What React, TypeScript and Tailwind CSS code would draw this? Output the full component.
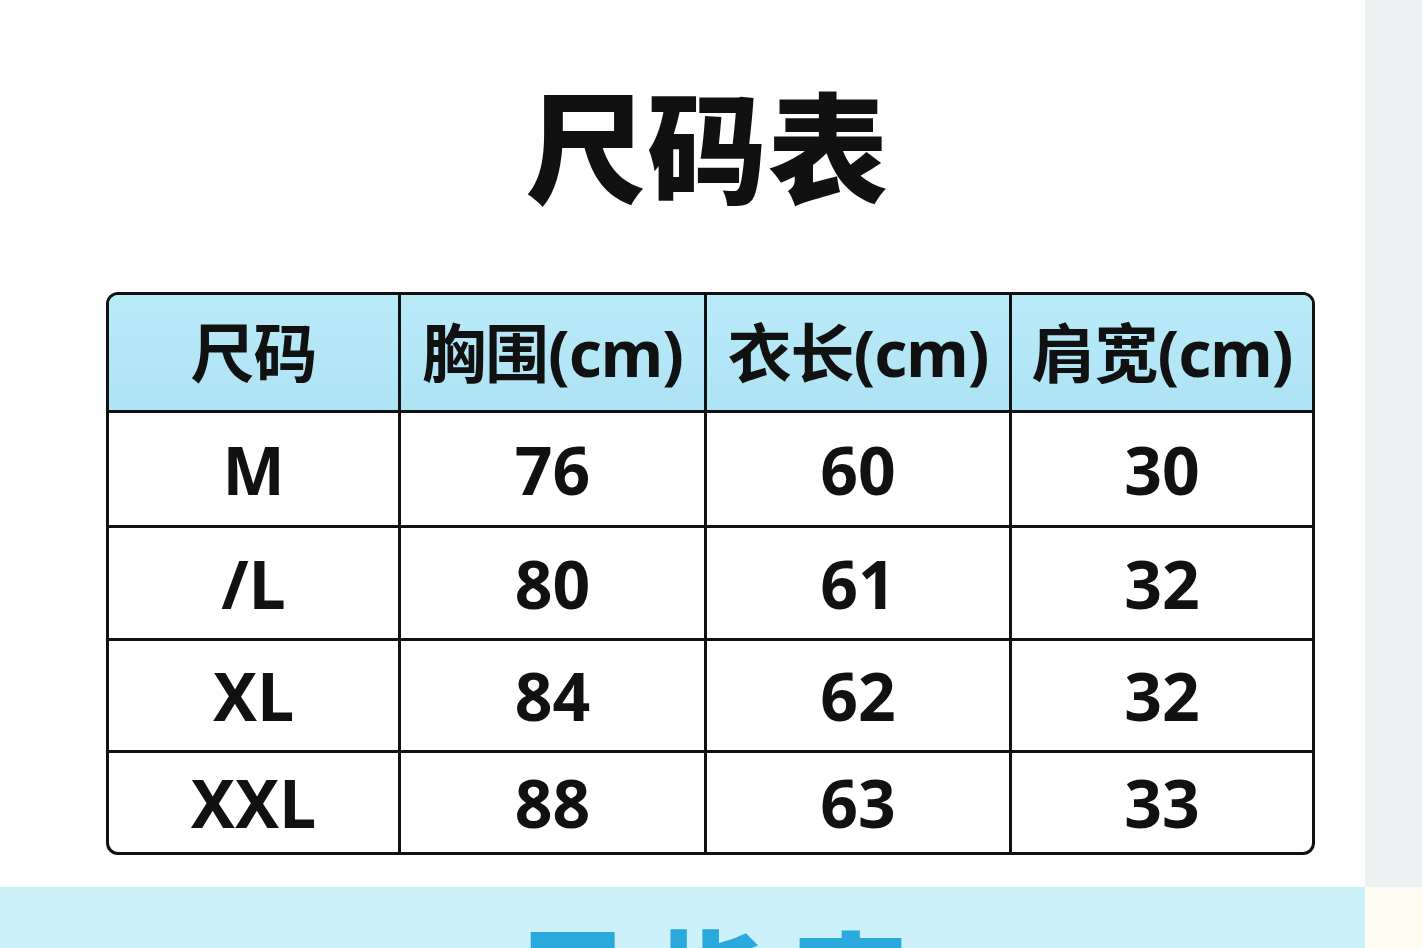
import React from 'react'

const headers = ['尺码', '胸围(cm)', '衣长(cm)', '肩宽(cm)']

const rows = [
    { size: 'M', chest: '76', length: '60', shoulder: '30', h: 'h-[115px]' },
    { size: '/L', chest: '80', length: '61', shoulder: '32', h: 'h-[113px]' },
    { size: 'XL', chest: '84', length: '62', shoulder: '32', h: 'h-[112px]' },
    { size: 'XXL', chest: '88', length: '63', shoulder: '33', h: 'h-[99px]' },
]

const font = { fontFamily: '"Noto Sans", "Noto Sans CJK SC", sans-serif' }

export default function App() {
    return (
        <div className="flex w-[1422px] h-[948px] overflow-hidden" style={font}>
            <div className="flex flex-col w-[1365px]">
                <div className="h-[887px] bg-[#fefefe] flex flex-col items-center pl-[56px]">
                    <p className="mt-[89px] text-[120px] leading-none font-black text-[#111] tracking-[1px] pr-[6px]">
                        尺码表
                    </p>

                    <div className="mt-[83px] w-[1209px] border-[3px] border-[#111] rounded-[12px] overflow-hidden bg-white">
                        <div className="grid grid-cols-[292px_306px_305px_300px] h-[118px] bg-gradient-to-b from-[#b9eaf8] to-[#aee3f4] border-b-[3px] border-[#111]">
                            {headers.map((h, i) => (
                                <div
                                    key={h}
                                    className={`flex items-center justify-center text-[64px] font-bold text-[#111] tracking-[-1px] ${i < 3 ? 'border-r-[3px] border-[#111]' : ''}`}
                                >
                                    {h}
                                </div>
                            ))}
                        </div>
                        {rows.map((r, ri) => (
                            <div
                                key={r.size}
                                className={`grid grid-cols-[292px_306px_305px_300px] ${r.h} ${ri < rows.length - 1 ? 'border-b-[3px] border-[#111]' : ''}`}
                            >
                                {[r.size, r.chest, r.length, r.shoulder].map((v, i) => (
                                    <div
                                        key={i}
                                        className={`flex items-center justify-center text-[66px] font-bold text-[#111] ${i < 3 ? 'border-r-[3px] border-[#111]' : ''}`}
                                    >
                                        {v}
                                    </div>
                                ))}
                            </div>
                        ))}
                    </div>
                </div>
                <div className="h-[61px] bg-[#cdf1fa] flex justify-center overflow-hidden pl-[56px]">
                    <p className="mt-[39px] text-[114px] leading-none font-black text-[#29a9dc] tracking-[26px] pl-[26px]">
                        尺指南
                    </p>
                </div>
            </div>
            <div className="flex flex-col w-[57px]">
                <div className="h-[887px] bg-[#eef1f1]" />
                <div className="h-[61px] bg-[#fcfcf3]" />
            </div>
        </div>
    )
}
